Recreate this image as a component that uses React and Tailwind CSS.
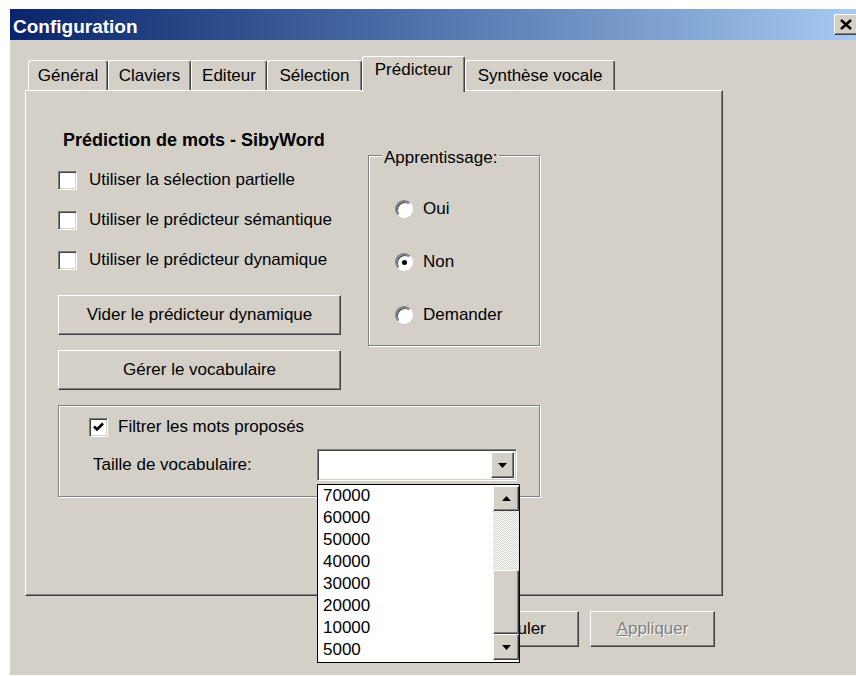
import React from "react";

const raised =
  "bg-[#d4d0c8] border border-t-white border-l-white border-r-[#404040] border-b-[#404040] shadow-[inset_-1px_-1px_#808080]";
const sunken =
  "border border-t-[#808080] border-l-[#808080] border-r-white border-b-white shadow-[inset_1px_1px_#404040,inset_-1px_-1px_#d4d0c8]";
const etched =
  "border border-[#808080] shadow-[inset_1px_1px_#ffffff,1px_1px_#ffffff]";

const tabs = [
  { label: "Général", w: "w-[80px]" },
  { label: "Claviers", w: "w-[83px]" },
  { label: "Editeur", w: "w-[76px]" },
  { label: "Sélection", w: "w-[95px]" },
  { label: "Prédicteur", w: "w-[103px]", active: true },
  { label: "Synthèse vocale", w: "w-[150px]" },
];

const sizes = ["70000", "60000", "50000", "40000", "30000", "20000", "10000", "5000"];

function Arrow({ up }) {
  return (
    <svg width="9" height="5" viewBox="0 0 9 5">
      <path d={up ? "M4.5 0L9 5H0z" : "M0 0h9L4.5 5z"} fill="#000" />
    </svg>
  );
}

function Checkbox({ checked }) {
  return (
    <span className={`flex h-[19px] w-[19px] shrink-0 items-center justify-center bg-white ${sunken}`}>
      {checked && (
        <svg width="11" height="10" viewBox="0 0 11 10">
          <path d="M1 4.5l3 3L10 1.5" fill="none" stroke="#000" strokeWidth="2.6" />
        </svg>
      )}
    </span>
  );
}

function Radio({ checked }) {
  return (
    <span className="flex h-[18px] w-[18px] shrink-0 items-center justify-center rounded-full border-2 border-t-[#808080] border-l-[#808080] border-r-white border-b-white bg-white shadow-[inset_1px_1px_#404040]">
      {checked && <span className="h-[5px] w-[5px] rounded-full bg-black" />}
    </span>
  );
}

function CheckRow({ label, checked }) {
  return (
    <div className="flex h-[40px] items-center gap-[12px]">
      <Checkbox checked={checked} />
      <span>{label}</span>
    </div>
  );
}

function Button({ children, className = "" }) {
  return (
    <div className={`flex items-center justify-center ${raised} ${className}`}>{children}</div>
  );
}

function VocabCombo() {
  return (
    <div className={`relative flex h-[32px] w-[200px] justify-end bg-white p-[2px] ${sunken}`}>
      <div className={`flex w-[23px] items-center justify-center ${raised}`}>
        <Arrow />
      </div>

      {/* liste déroulée */}
      <div className="absolute left-[-1px] top-[34px] z-20 flex h-[179px] w-[203px] border border-black bg-white">
        <ul className="flex-1 pl-[5px]">
          {sizes.map((s) => (
            <li key={s} className="h-[22px] leading-[22px]">
              {s}
            </li>
          ))}
        </ul>
        <div className="flex w-[26px] flex-col pt-[1px] pb-[2px]">
          <div className={`flex h-[25px] items-center justify-center ${raised}`}>
            <Arrow up />
          </div>
          <div className="h-[59px] bg-[repeating-conic-gradient(#ffffff_0_25%,#d4d0c8_0_50%)] bg-[length:2px_2px]" />
          <div className={`flex-1 ${raised}`} />
          <div className={`flex h-[26px] items-center justify-center ${raised}`}>
            <Arrow />
          </div>
        </div>
      </div>
    </div>
  );
}

export default function App() {
  return (
    <div className="min-h-[676px] bg-white pl-[10px] pt-[9px] font-['Liberation_Sans',Arial,sans-serif] text-[17px] leading-[20px] text-black">
      <div className="flex h-[666px] w-[846px] flex-col overflow-hidden bg-[#d4d0c8]">
        {/* barre de titre */}
        <div className="flex h-[31px] shrink-0 items-start justify-between bg-gradient-to-r from-[#0a246a] to-[#a6caf0]">
          <span className="ml-[3px] mt-[7px] text-[19px] font-bold leading-[22px] text-white">
            Configuration
          </span>
          <div className={`-mr-[2px] mt-[5px] flex h-[21px] w-[24px] items-center justify-center ${raised}`}>
            <svg width="12" height="11" viewBox="0 0 12 11">
              <path d="M1 1l10 9M11 1L1 10" stroke="#000" strokeWidth="2.4" />
            </svg>
          </div>
        </div>

        <div className="pl-[15px]">
          {/* onglets */}
          <div className="mt-[16px] flex h-[34px] items-end pl-[3px]">
            {tabs.map((t) =>
              t.active ? (
                <div
                  key={t.label}
                  className={`relative z-10 -mb-[2px] h-[36px] ${t.w} rounded-t-[3px] border-l border-t border-l-white border-t-white border-r border-r-[#404040] bg-[#d4d0c8] pt-[3px] text-center shadow-[inset_-1px_0_#808080]`}
                >
                  {t.label}
                </div>
              ) : (
                <div
                  key={t.label}
                  className={`h-[30px] ${t.w} rounded-t-[3px] border-l border-t border-l-white border-t-white border-r border-r-[#404040] pt-[5px] text-center shadow-[inset_-1px_0_#808080]`}
                >
                  {t.label}
                </div>
              )
            )}
          </div>

          {/* panneau Prédicteur */}
          <div className={`relative h-[506px] w-[698px] pl-[32px] pt-[38px] ${raised}`}>
            <div className="flex items-start">
              <div className="w-[283px]">
                <div className="pl-[5px] text-[18px] font-bold leading-[22px]">
                  Prédiction de mots - SibyWord
                </div>
                <div className="mt-[9px]">
                  <CheckRow label="Utiliser la sélection partielle" />
                  <CheckRow label="Utiliser le prédicteur sémantique" />
                  <CheckRow label="Utiliser le prédicteur dynamique" />
                </div>
                <Button className="mt-[15px] h-[40px]">Vider le prédicteur dynamique</Button>
                <Button className="mt-[15px] h-[40px]">Gérer le vocabulaire</Button>
              </div>

              <div className={`relative ml-[27px] mt-[26px] h-[191px] w-[172px] ${etched}`}>
                <span className="absolute left-[13px] top-[-8px] bg-[#d4d0c8] px-[2px]">
                  Apprentissage:
                </span>
                <div className="flex flex-col gap-[35px] pl-[26px] pt-[44px]">
                  <label className="flex h-[18px] items-center gap-[10px]">
                    <Radio />
                    Oui
                  </label>
                  <label className="flex h-[18px] items-center gap-[10px]">
                    <Radio checked />
                    Non
                  </label>
                  <label className="flex h-[18px] items-center gap-[10px]">
                    <Radio />
                    Demander
                  </label>
                </div>
              </div>
            </div>

            <div className={`mt-[15px] h-[92px] w-[482px] pl-[30px] pt-[11px] ${etched}`}>
              <div className="flex h-[20px] items-center gap-[10px]">
                <Checkbox checked />
                <span>Filtrer les mots proposés</span>
              </div>
              <div className="mt-[12px] flex items-center">
                <span className="w-[228px] pl-[4px]">Taille de vocabulaire:</span>
                <VocabCombo />
              </div>
            </div>
          </div>

          {/* boutons du bas */}
          <div className="mt-[15px] flex w-[698px] justify-end gap-[11px] pr-[8px]">
            <Button className="h-[36px] w-[125px]">OK</Button>
            <Button className="h-[36px] w-[125px]">Annuler</Button>
            <Button className="h-[36px] w-[125px] text-[#808080] [text-shadow:1px_1px_0_#ffffff]">
              <span>
                <span className="underline">A</span>ppliquer
              </span>
            </Button>
          </div>
        </div>
      </div>
    </div>
  );
}
